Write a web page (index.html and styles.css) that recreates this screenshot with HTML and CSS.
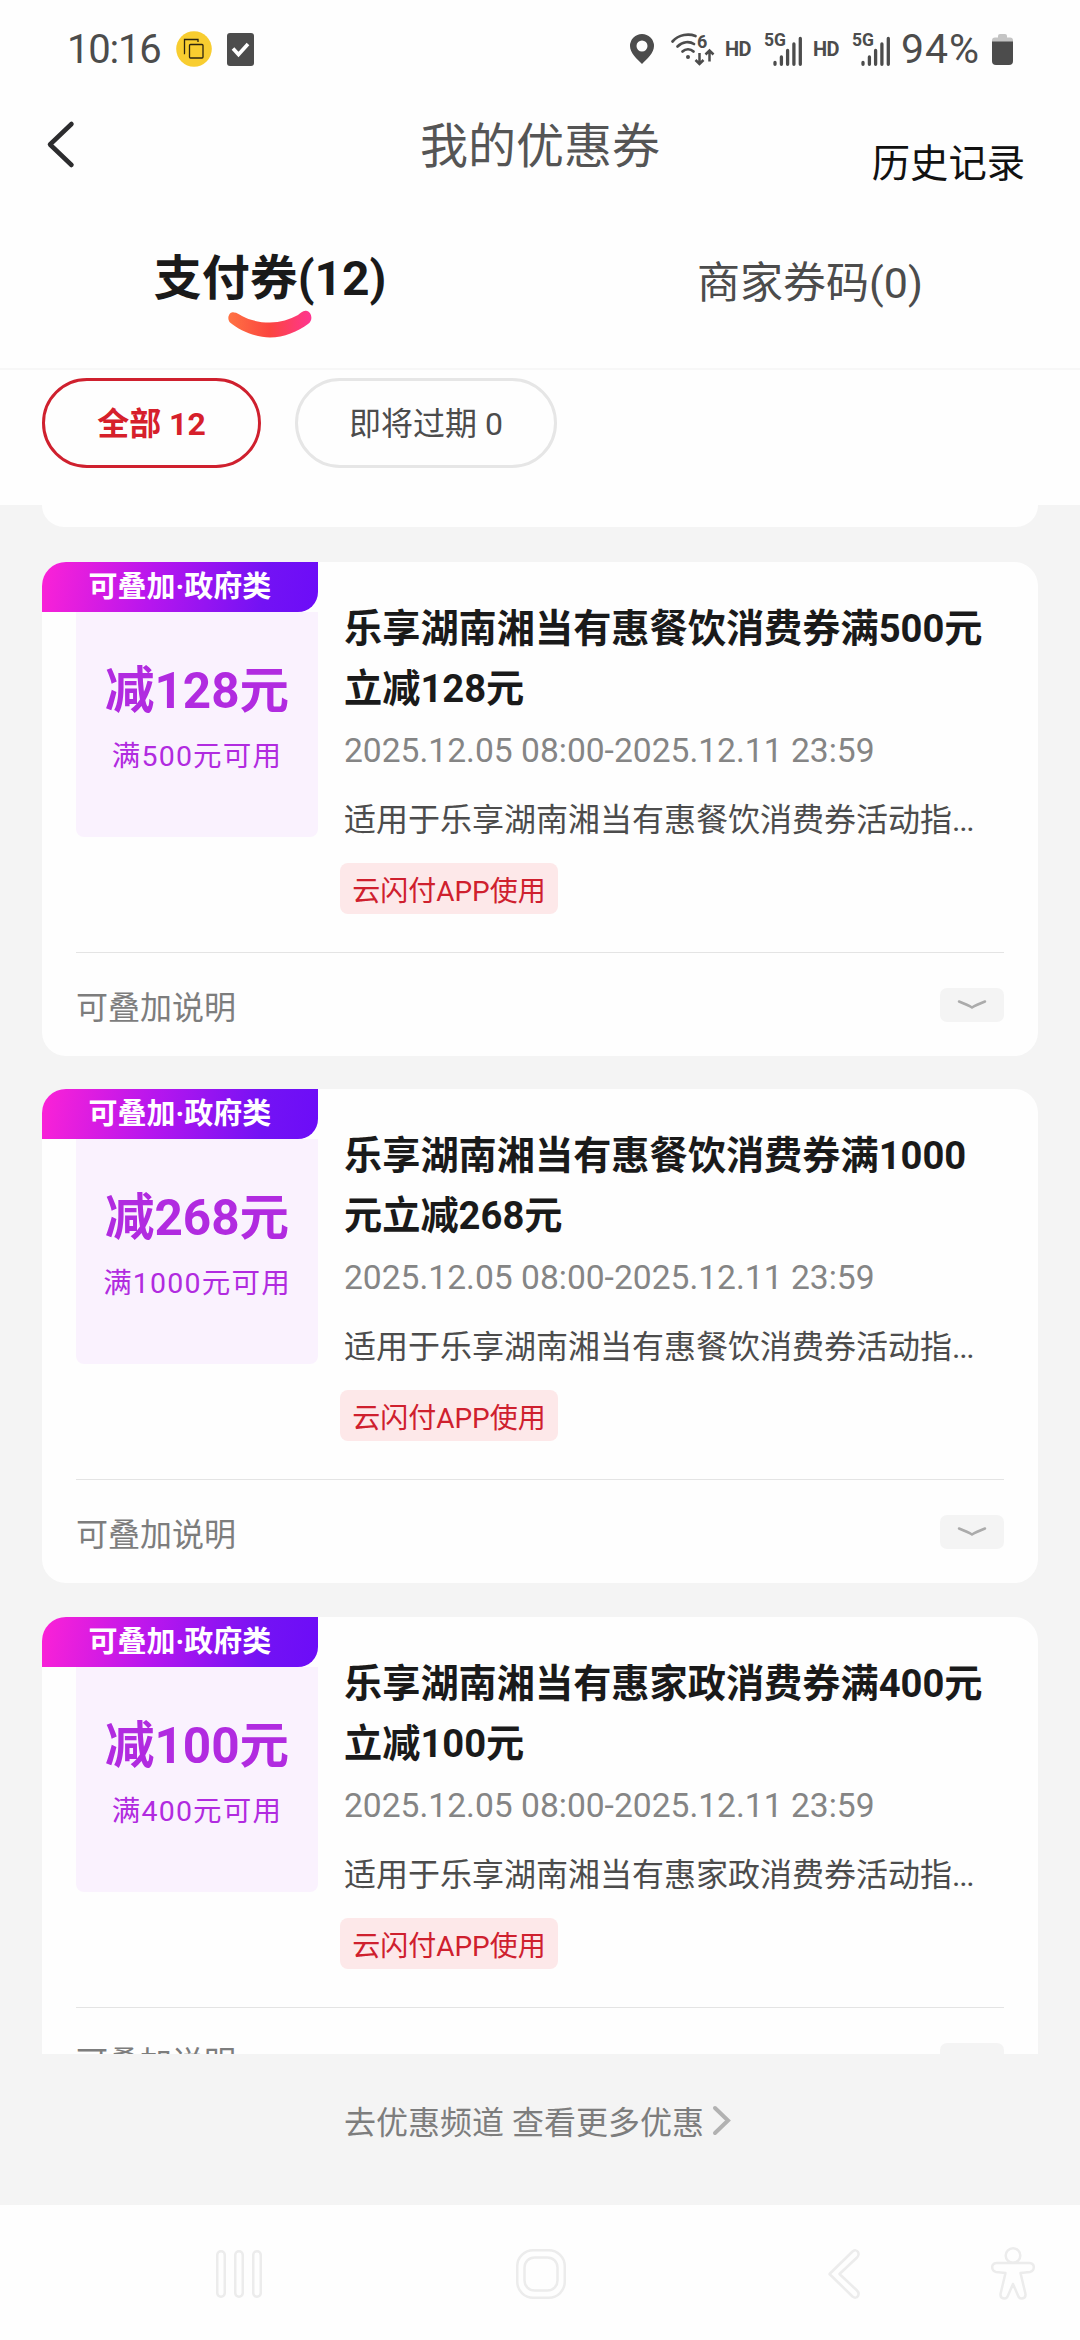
FILE: index.html
```html
<!DOCTYPE html>
<html lang="zh-CN">
<head>
<meta charset="utf-8">
<title>我的优惠券</title>
<link rel="stylesheet" href="styles.css">
</head>
<body>
<div class="screen">
  <div class="status">
    <span class="clock">10:16</span>
    <svg class="copy-badge" width="36" height="36" viewBox="0 0 36 36"><circle cx="18" cy="18" r="17.8" fill="#f8cd30"/><path d="M9 22.500H8.500V8.500H22V11" fill="none" stroke="#2b2410" stroke-width="1.300"/><rect x="13.500" y="13.500" width="13.500" height="13.500" rx="1" fill="none" stroke="#2b2410" stroke-width="1.300"/></svg>
    <svg class="check" width="27" height="33" viewBox="0 0 27 33"><rect width="27" height="33" rx="3" fill="#4c4c4c"/><path d="M6 15.500l5.500 6L21 11" fill="none" stroke="#fff" stroke-width="3.600"/></svg>
    <span class="spacer"></span>
    <svg class="pin" width="24" height="30" viewBox="0 0 24 30"><path fill-rule="evenodd" fill="#4c4c4c" d="M12 0a12 12 0 0 1 12 12c0 7-7 13-12 18C7 25 0 19 0 12A12 12 0 0 1 12 0zm0 6.500a5.500 5.500 0 1 0 0 11 5.500 5.500 0 0 0 0-11z"/></svg>
    <svg class="wifi" width="44" height="33" viewBox="0 0 44 33"><g fill="none" stroke="#4c4c4c" stroke-width="2.700" stroke-linecap="round"><path d="M1.500 8.500C8 1 18 .500 24.500 3"/><path d="M6.500 13.500c5-5 12-5.500 16.500-2.500"/><path d="M11.500 18.500c3-3 8-3 11 0"/><path d="M28.500 20v10.500M24.500 27l4 4 4-4M38.500 28.500V18M34.500 21.500l4-4 4 4" stroke-linecap="butt" stroke-width="2.500"/></g><circle cx="17" cy="24" r="2" fill="#4c4c4c"/><text x="26" y="14.500" class="svg-six">6</text></svg>
    <span class="hd">HD</span>
    <svg class="signal" width="39" height="34" viewBox="0 0 39 34"><text x="0" y="13.500" class="svg-5g" textLength="22" lengthAdjust="spacingAndGlyphs">5G</text><path d="M11 30.500v1.800M17.400 25v7.300M23.600 18.500v13.800M29.900 12v20.300M36.300 6.500v25.800" stroke="#4c4c4c" stroke-width="3.300" stroke-linecap="round"/></svg>
    <span class="hd">HD</span>
    <svg class="signal" width="39" height="34" viewBox="0 0 39 34"><text x="0" y="13.500" class="svg-5g" textLength="22" lengthAdjust="spacingAndGlyphs">5G</text><path d="M11 30.500v1.800M17.400 25v7.300M23.600 18.500v13.800M29.900 12v20.300M36.300 6.500v25.800" stroke="#4c4c4c" stroke-width="3.300" stroke-linecap="round"/></svg>
    <span class="percent">94%</span>
    <svg class="battery" width="21" height="31" viewBox="0 0 21 31"><path d="M6 2q0-2 2-2h5q2 0 2 2v1.500h3q3 0 3 3V8H0V6.500q0-3 3-3h3z" fill="#c4c4c4"/><path d="M0 7.500h21V27q0 4-4 4H4q-4 0-4-4z" fill="#4c4c4c"/></svg>
  </div>

  <header class="header">
    <svg class="back" width="28" height="47" viewBox="0 0 28 47"><path d="M24.500 3L3 23.500 24.500 44" fill="none" stroke="#2c2c2e" stroke-width="4.500" stroke-linecap="round" stroke-linejoin="round"/></svg>
    <h1 class="title">我的优惠券</h1>
    <a class="history">历史记录</a>
  </header>

  <nav class="tabs">
    <div class="tab active"><span>支付券(12)</span>
      <svg class="smile" width="84" height="27" viewBox="0 0 84 27"><defs><linearGradient id="smile" x1="0" x2="1" y1="0" y2="0"><stop offset="0" stop-color="#ff7243"/><stop offset=".5" stop-color="#fb453f"/><stop offset="1" stop-color="#ff3590"/></linearGradient></defs><path d="M6 1.500C2-.500-2 7 2 11.500C12 20 28 26.500 42 26.500C56 26.500 70 20.500 80 13C86 8.500 83 1 79 0C75-1 73 2 70 4C62 8.500 52 11.500 42 11.500C31 11.500 21 9 14 5C11 3.500 9 1.500 6 1.500z" fill="url(#smile)"/></svg>
    </div>
    <div class="tab"><span>商家券码(0)</span></div>
  </nav>

  <div class="filters">
    <span class="pill selected">全部 12</span>
    <span class="pill">即将过期 0</span>
  </div>

  <main class="list">
    <div class="card-end"></div>

    <article class="card">
      <div class="ribbon">可叠加·政府类</div>
      <div class="body">
        <div class="value"><b>减128元</b><span>满500元可用</span></div>
        <div class="info">
          <h2>乐享湖南湘当有惠餐饮消费券满500元<br>立减128元</h2>
          <p class="date">2025.12.05 08:00-2025.12.11 23:59</p>
          <p class="scope">适用于乐享湖南湘当有惠餐饮消费券活动指<span class="dots">...</span></p>
          <span class="badge">云闪付APP使用</span>
        </div>
      </div>
      <div class="more"><span>可叠加说明</span><i class="toggle"><svg width="30" height="10" viewBox="0 0 30 10"><path d="M2 1.500Q11 5 15 7.500Q19 5 28 1.500" fill="none" stroke="#ababab" stroke-width="2.500" stroke-linecap="round"/></svg></i></div>
    </article>

    <article class="card">
      <div class="ribbon">可叠加·政府类</div>
      <div class="body">
        <div class="value"><b>减268元</b><span>满1000元可用</span></div>
        <div class="info">
          <h2>乐享湖南湘当有惠餐饮消费券满1000<br>元立减268元</h2>
          <p class="date">2025.12.05 08:00-2025.12.11 23:59</p>
          <p class="scope">适用于乐享湖南湘当有惠餐饮消费券活动指<span class="dots">...</span></p>
          <span class="badge">云闪付APP使用</span>
        </div>
      </div>
      <div class="more"><span>可叠加说明</span><i class="toggle"><svg width="30" height="10" viewBox="0 0 30 10"><path d="M2 1.500Q11 5 15 7.500Q19 5 28 1.500" fill="none" stroke="#ababab" stroke-width="2.500" stroke-linecap="round"/></svg></i></div>
    </article>

    <article class="card">
      <div class="ribbon">可叠加·政府类</div>
      <div class="body">
        <div class="value"><b>减100元</b><span>满400元可用</span></div>
        <div class="info">
          <h2>乐享湖南湘当有惠家政消费券满400元<br>立减100元</h2>
          <p class="date">2025.12.05 08:00-2025.12.11 23:59</p>
          <p class="scope">适用于乐享湖南湘当有惠家政消费券活动指<span class="dots">...</span></p>
          <span class="badge">云闪付APP使用</span>
        </div>
      </div>
      <div class="more"><span>可叠加说明</span><i class="toggle"><svg width="30" height="10" viewBox="0 0 30 10"><path d="M2 1.500Q11 5 15 7.500Q19 5 28 1.500" fill="none" stroke="#ababab" stroke-width="2.500" stroke-linecap="round"/></svg></i></div>
    </article>
  </main>

  <footer class="channel">
    <span>去优惠频道 查看更多优惠</span>
    <svg width="18" height="29" viewBox="0 0 18 29"><path d="M2 2L15 14.500 2 27" fill="none" stroke="#b2b2b2" stroke-width="4" stroke-linecap="round"/></svg>
  </footer>

  <div class="system-nav">
    <svg class="recents" width="46" height="48" viewBox="0 0 46 48"><g fill="none" stroke="#ececec" stroke-width="2.500"><rect x="1.250" y="1.250" width="7.500" height="45.500" rx="3.700"/><rect x="19.250" y="1.250" width="7.500" height="45.500" rx="3.700"/><rect x="37.250" y="1.250" width="7.500" height="45.500" rx="3.700"/></g></svg>
    <svg class="home" width="50" height="50" viewBox="0 0 50 50"><g fill="none" stroke="#ececec" stroke-width="2.500"><rect x="1.250" y="1.250" width="47.500" height="47.500" rx="16"/><rect x="8.500" y="8.500" width="33" height="33" rx="10"/></g></svg>
    <svg class="go-back" width="32" height="50" viewBox="0 0 32 50"><path d="M1.500 25L24.500 2.500Q28 0 30 3Q31.500 6 29 8.500L11.500 25L29 41.500Q31.500 44 30 47Q28 50 24.500 47.500z" fill="none" stroke="#ececec" stroke-width="2.500" stroke-linejoin="round"/></svg>
    <svg class="access" width="44" height="53" viewBox="0 0 44 53"><g fill="none" stroke="#ececec" stroke-width="2.500" stroke-linejoin="round"><circle cx="22" cy="8.500" r="7.300"/><path d="M5.500 16H38.500Q42.800 16.500 42.800 20Q42.800 24 39 25L29.500 26L34.500 47Q34.800 51 31 51.500Q28 51.800 27 48.500L22 37L17 48.500Q16 51.800 13 51.500Q9.200 51 9.500 47L14.500 26L5 25Q1.200 24 1.200 20Q1.200 16.500 5.500 16z"/></g></svg>
  </div>
</div>
</body>
</html>
```
FILE: styles.css
```css
* { box-sizing: border-box; }
body { margin: 0; background: #fefefe; font-family: Roboto, "Noto Sans CJK SC", sans-serif; }
h1, h2, p { margin: 0; }
svg { display: block; flex: none; overflow: visible; }
.screen { width: 1080px; height: 2340px; display: flex; flex-direction: column; overflow: hidden; white-space: nowrap; }

.status { height: 98px; display: flex; align-items: center; padding: 0 67px 0 67px; color: #4c4c4c; flex: none; }
.clock { width: 109px; font-size: 40px; letter-spacing: -1.2px; }
.check { margin-left: 15px; }
.spacer { flex: 1; }
.wifi { margin-left: 17px; }
.hd { width: 26px; margin-left: 10px; font-size: 20px; font-weight: 700; letter-spacing: -.5px; }
.signal { margin-left: 13px; }
.percent { width: 81px; margin-left: 10px; font-size: 41px; letter-spacing: .9px; }
.battery { margin-left: 10px; }
.svg-5g { font: 700 17.500px Roboto, sans-serif; fill: #4c4c4c; }
.svg-six { font: 700 18px Roboto, sans-serif; fill: #4c4c4c; }

.header { height: 108px; display: grid; grid-template-columns: 1fr auto 1fr; padding: 0 55px 0 47px; flex: none; }
.back { margin-top: 23px; }
.title { padding-left: 8px; font-size: 48px; line-height: 98px; font-weight: 400; color: #555; }
.history { justify-self: end; font-size: 38.300px; line-height: 131px; color: #111; }

.tabs { height: 164px; display: grid; grid-template-columns: 1fr 1fr; border-bottom: 2px solid #f7f7f7; flex: none; }
.tab { display: flex; flex-direction: column; align-items: center; padding-top: 37px; font-size: 43px; line-height: 80px; color: #4c4c4c; }
.tab.active { padding-top: 33px; font-size: 48px; font-weight: 700; color: #1a1a1a; }
.smile { margin-top: -8px; }

.filters { height: 135px; display: flex; align-items: flex-start; gap: 34px; padding: 8px 42px 0; flex: none; }
.pill { height: 90px; width: 262px; border: 3px solid #e6e6e6; border-radius: 45px; font-size: 32px; line-height: 87px; text-align: center; color: #4c4c4c; }
.pill.selected { width: 219px; border-color: #cf202e; color: #d6202b; font-weight: 700; }

.list { height: 1549px; display: flex; flex-direction: column; gap: 33.500px; padding: 0 42px; background: #f4f4f4; overflow: hidden; flex: none; }
.card-end { height: 22px; margin-bottom: 1.300px; background: #fefefe; border-radius: 0 0 24px 24px; flex: none; }
.card { height: 494px; background: #fefefe; border-radius: 24px; padding: 0 34px; flex: none; }
.ribbon { width: 276px; height: 50px; margin-left: -34px; border-radius: 24px 0 20px 0; background: linear-gradient(100deg, #fc22d6, #b716ee 40%, #7312f4 80%, #6c0cf8); color: #fff; font-size: 29px; line-height: 51px; font-weight: 700; text-align: center; }
.body { height: 341px; display: flex; border-bottom: 1px solid #e4e4e4; }
.value { width: 242px; height: 225px; display: flex; flex-direction: column; align-items: center; background: #faf2fe; border-radius: 0 0 8px 8px; color: #b12be0; padding-top: 44px; }
.value b { font-size: 49.500px; line-height: 71px; font-weight: 700; }
.value span { font-size: 28.500px; line-height: 60px; letter-spacing: 1.200px; }
.info { padding: 0 0 0 22px; }
.info h2 { padding-left: 4px; margin-top: -13px; font-size: 38.200px; line-height: 60px; font-weight: 700; color: #1a1a1a; }
.date { padding-left: 4px; font-size: 33.600px; line-height: 64px; color: #858585; }
.scope { padding-left: 4px; font-size: 32px; line-height: 74px; color: #4c4c4c; }
.dots { letter-spacing: -1.300px; }
.badge { display: inline-block; width: 218px; height: 51px; margin-top: 6px; border-radius: 8px; background: #fde8e9; color: #cf202e; font-size: 28px; line-height: 58px; text-align: center; }
.more { height: 103px; display: flex; align-items: center; justify-content: space-between; padding-top: 1px; font-size: 32px; color: #7d7d7d; }
.toggle { width: 64px; height: 34px; display: flex; align-items: center; justify-content: center; background: #f4f4f4; border-radius: 7px; }

.channel { height: 151px; display: flex; align-items: center; gap: 9px; padding: 0 0 19px 344px; background: #f4f4f4; color: #7d7d7d; font-size: 32px; flex: none; }
.system-nav { height: 135px; display: flex; align-items: center; padding: 2px 45px 0 216px; }
.home { margin-left: 254px; }
.go-back { margin-left: 262px; }
.access { margin-left: auto; }
```
